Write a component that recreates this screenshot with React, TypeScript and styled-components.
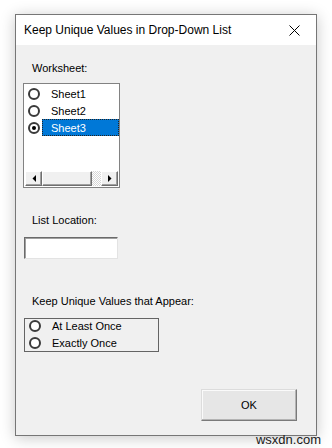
import * as React from 'react';
import styled, {createGlobalStyle} from 'styled-components';

const Global = createGlobalStyle`
  html, body { margin: 0; padding: 0; background: #fff; }
  * { box-sizing: border-box; }
`

const Page = styled.div`
  position: relative;
  width: 332px;
  height: 448px;
  padding: 14px 0 0 15px;
  background: #fff;
  overflow: hidden;
  font-family: "Liberation Sans", Arial, sans-serif;
`

const Window = styled.div`
  width: 302px;
  height: 422px;
  display: flex;
  flex-direction: column;
  border: 1px solid #767676;
  box-shadow: 0 2px 14px rgba(0, 0, 0, 0.22);
  background: #f0f0f0;
`

const TitleBar = styled.div`
  height: 30px;
  display: flex;
  align-items: center;
  justify-content: space-between;
  padding: 0 8px 0 8px;
  background: #fff;
  font-size: 12px;
  color: #000;
`

const Close = styled.div`
  width: 28px;
  height: 28px;
  display: flex;
  align-items: center;
  justify-content: center;
`

const Body = styled.div`
  flex: 1;
  display: flex;
  flex-direction: column;
  align-items: flex-start;
  padding: 0 0 0 8px;
`

const Label = styled.div<{$top: number}>`
  margin: ${p => p.$top}px 0 0 8px;
  height: 14px;
  line-height: 14px;
  font-size: 11px;
  color: #000;
`

const ListBox = styled.div`
  margin: 8px 0 0 -1px;
  width: 97px;
  height: 105px;
  display: flex;
  flex-direction: column;
  background: #fff;
  border: 1px solid #828282;
  padding-top: 1px;
`

const Rows = styled.div`
  flex: 1;
`

const Row = styled.div<{$h: number}>`
  display: flex;
  align-items: center;
  height: ${p => p.$h}px;
  font-size: 11px;
`

const Radio = styled.span<{$on?: boolean}>`
  position: relative;
  flex: none;
  width: 12px;
  height: 12px;
  margin-left: 4px;
  border-radius: 50%;
  border: 2px solid #3a3a3a;
  background: #fff;
  &::after {
    content: '';
    display: ${p => (p.$on ? 'block' : 'none')};
    position: absolute;
    left: 2px;
    top: 2px;
    width: 4px;
    height: 4px;
    border-radius: 50%;
    background: #000;
  }
`

const ItemText = styled.span<{$sel?: boolean}>`
  flex: 1;
  align-self: stretch;
  display: flex;
  align-items: center;
  margin-left: 2px;
  padding-left: 9px;
  background: ${p => (p.$sel ? '#0078d7' : 'transparent')};
  color: ${p => (p.$sel ? '#fff' : '#000')};
  outline: ${p => (p.$sel ? '1px dotted #222' : 'none')};
  outline-offset: -1px;
`

const ScrollBar = styled.div`
  height: 15px;
  display: flex;
  margin: 0 1px 1px 1px;
  background-color: #f4f4f4;
  background-image: repeating-conic-gradient(#ffffff 0 25%, #d6d6d6 0 50%);
  background-size: 2px 2px;
`

const ScrollBtn = styled.div<{$w: number}>`
  width: ${p => p.$w}px;
  height: 15px;
  display: flex;
  align-items: center;
  justify-content: center;
  background: #f0f0f0;
  border: 1px solid;
  border-color: #fff #6f6f6f #6f6f6f #fff;
  box-shadow: inset -1px -1px 0 #a0a0a0;
`

const Track = styled.div`
  flex: 1;
`

const TextBox = styled.div`
  margin: 10px 0 0 0;
  width: 94px;
  height: 22px;
  background: #fff;
  border: 1px solid;
  border-color: #6a6a6a #e3e3e3 #e3e3e3 #6a6a6a;
  box-shadow: inset 1px 1px 0 #a0a0a0;
`

const Frame = styled.div`
  margin: 10px 0 0 0;
  width: 135px;
  height: 34px;
  border: 1px solid #646464;
  display: flex;
  flex-direction: column;
  gap: 4px;
  padding-top: 0;
`

const Footer = styled.div`
  align-self: stretch;
  display: flex;
  justify-content: flex-end;
  padding-right: 19px;
  margin-top: 37px;
`

const Button = styled.div`
  width: 96px;
  height: 32px;
  display: flex;
  align-items: center;
  justify-content: center;
  font-size: 11px;
  background: #e6e6e6;
  border: 1px solid;
  border-color: #dcdcdc #7a7a7a #7a7a7a #dcdcdc;
  box-shadow: inset -1px -1px 0 #b4b4b4, inset 1px 1px 0 #fafafa;
`

const Watermark = styled.div`
  position: absolute;
  right: 11px;
  bottom: 1px;
  font-size: 13px;
  color: #1a1a1a;
  font-family: "Liberation Sans", Arial, sans-serif;
`

const Arrow = ({dir}: {dir: 'l' | 'r'}) => (
  <svg width="4" height="7" viewBox="0 0 4 7">
    {dir === 'l' ? <polygon points="4,0 4,7 0.5,3.5" fill="#000"/> : <polygon points="0,0 0,7 3.5,3.5" fill="#000"/>}
  </svg>
)

const sheets = ['Sheet1', 'Sheet2', 'Sheet3']

export default function App() {
  return (
    <Page>
      <Global/>
      <Window>
        <TitleBar>
          <span>Keep Unique Values in Drop-Down List</span>
          <Close>
            <svg width="11" height="11" viewBox="0 0 11 11">
              <path d="M0.5 0.5 L10.5 10.5 M10.5 0.5 L0.5 10.5" stroke="#000" strokeWidth="1"/>
            </svg>
          </Close>
        </TitleBar>
        <Body>
          <Label $top={16}>Worksheet:</Label>
          <ListBox>
            <Rows>
              {sheets.map((s, i) => (
                <Row key={s} $h={17}>
                  <Radio $on={i === 2}/>
                  <ItemText $sel={i === 2}>{s}</ItemText>
                </Row>
              ))}
            </Rows>
            <ScrollBar>
              <ScrollBtn $w={17}><Arrow dir="l"/></ScrollBtn>
              <ScrollBtn $w={50}/>
              <Track/>
              <ScrollBtn $w={17}><Arrow dir="r"/></ScrollBtn>
            </ScrollBar>
          </ListBox>
          <Label $top={25}>List Location:</Label>
          <TextBox/>
          <Label $top={35}>Keep Unique Values that Appear:</Label>
          <Frame>
            <Row $h={13}>
              <Radio/>
              <ItemText>At Least Once</ItemText>
            </Row>
            <Row $h={13}>
              <Radio/>
              <ItemText>Exactly Once</ItemText>
            </Row>
          </Frame>
          <Footer>
            <Button>OK</Button>
          </Footer>
        </Body>
      </Window>
      <Watermark>wsxdn.com</Watermark>
    </Page>
  );
}
